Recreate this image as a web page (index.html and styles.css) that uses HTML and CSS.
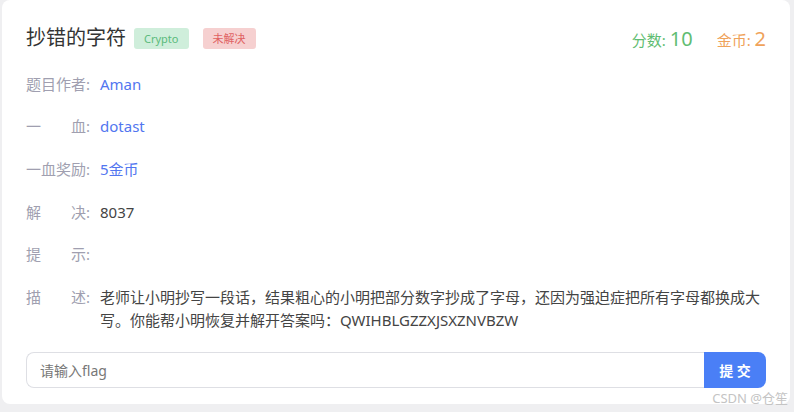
FILE: index.html
```html
<!DOCTYPE html>
<html lang="zh">
  <head>
    <meta charset="UTF-8" />
    <meta name="viewport" content="width=device-width, initial-scale=1.0" />
    <title>抄错的字符</title>
    <link rel="stylesheet" href="styles.css">
  </head>
  <body>
    <div class="card">
      <div class="header">
        <div class="title-wrap">
          <h1 class="title">抄错的字符</h1>
          <span class="tag tag-type">Crypto</span>
          <span class="tag tag-status">未解决</span>
        </div>
        <div class="stats">
          <span class="stat stat-score">分数: <b>10</b></span>
          <span class="stat stat-coin">金币: <b>2</b></span>
        </div>
      </div>

      <div class="row">
        <span class="label"><span class="label-text">题目作者</span>:</span>
        <span class="value link">Aman</span>
      </div>
      <div class="row">
        <span class="label"><span class="label-text">一血</span>:</span>
        <span class="value link">dotast</span>
      </div>
      <div class="row">
        <span class="label"><span class="label-text">一血奖励</span>:</span>
        <span class="value link">5金币</span>
      </div>
      <div class="row">
        <span class="label"><span class="label-text">解决</span>:</span>
        <span class="value">8037</span>
      </div>
      <div class="row">
        <span class="label"><span class="label-text">提示</span>:</span>
        <span class="value"></span>
      </div>
      <div class="row row-desc">
        <span class="label"><span class="label-text">描述</span>:</span>
        <span class="value desc">老师让小明抄写一段话，结果粗心的小明把部分数字抄成了字母，还因为强迫症把所有字母都换成大写。你能帮小明恢复并解开答案吗：QWIHBLGZZXJSXZNVBZW</span>
      </div>

      <form class="flag-form">
        <input type="text" class="flag-input" placeholder="请输入flag" />
        <button type="button" class="btn-submit">提 交</button>
      </form>
    </div>
    <div class="watermark">CSDN @仓笙</div>
  </body>
</html>
```

FILE: styles.css
```css
body {
  margin: 0;
  padding: 0 4px 0 2px;
  background: #efeff1;
  font-family: "Noto Sans", "Noto Sans CJK SC", sans-serif;
  color: #333;
}
.card {
  position: relative;
  height: 404px;
  box-sizing: border-box;
  background: #fff;
  border-radius: 8px;
  padding: 24px 24px 16px 24px;
}
.header {
  display: flex;
  justify-content: space-between;
  align-items: center;
  height: 28px;
}
.title-wrap {
  display: flex;
  align-items: center;
}
.title {
  margin: 0;
  font-size: 20px;
  font-weight: normal;
  line-height: 28px;
  color: #333;
}
.tag {
  display: inline-block;
  height: 21px;
  line-height: 21px;
  padding: 0 10px;
  border-radius: 3px;
  font-size: 11px;
}
.tag-type {
  margin-left: 8px;
  background: #cfeedb;
  color: #5bbb7b;
}
.tag-status {
  margin-left: 14px;
  background: #f6d0d0;
  color: #e06262;
}
.stats {
  display: flex;
  align-items: baseline;
  gap: 24px;
  padding-right: 0;
}
.stat {
  font-size: 15px;
}
.stat b {
  font-size: 20px;
  font-weight: normal;
}
.stat-score {
  color: #5fbd72;
}
.stat-coin {
  color: #efa25a;
}
.row {
  display: flex;
  margin-top: 20.7px;
  font-size: 15px;
  line-height: 22px;
}
.row:first-of-type {
  margin-top: 20px;
}
.label {
  flex: none;
  width: 74px;
  color: #a09fb0;
}
.label-text {
  display: inline-block;
  width: 60px;
  text-align: justify;
  text-align-last: justify;
}
.value {
  color: #444;
}
.link {
  color: #5276f0;
}
.row-desc {
  margin-top: 21px;
  line-height: 23px;
}
.desc {
  color: #444;
}
.flag-form {
  display: flex;
  margin-top: 20px;
}
.flag-input {
  flex: 1;
  height: 36px;
  box-sizing: border-box;
  border: 1px solid #dedfe4;
  border-right: none;
  border-radius: 8px 0 0 8px;
  padding: 0 13px;
  font-family: inherit;
  font-size: 14px;
  outline: none;
}
.flag-input::placeholder {
  color: #777;
}
.btn-submit {
  width: 62px;
  height: 36px;
  border: none;
  border-radius: 0 8px 8px 0;
  background: #4a7ff6;
  color: #fff;
  font-family: inherit;
  font-size: 14px;
  font-weight: bold;
  cursor: pointer;
}
.watermark {
  position: absolute;
  right: 6px;
  top: 388px;
  font-family: "Noto Sans", "Noto Sans CJK SC", sans-serif;
  font-size: 13px;
  color: #c4c4c4;
}
```
